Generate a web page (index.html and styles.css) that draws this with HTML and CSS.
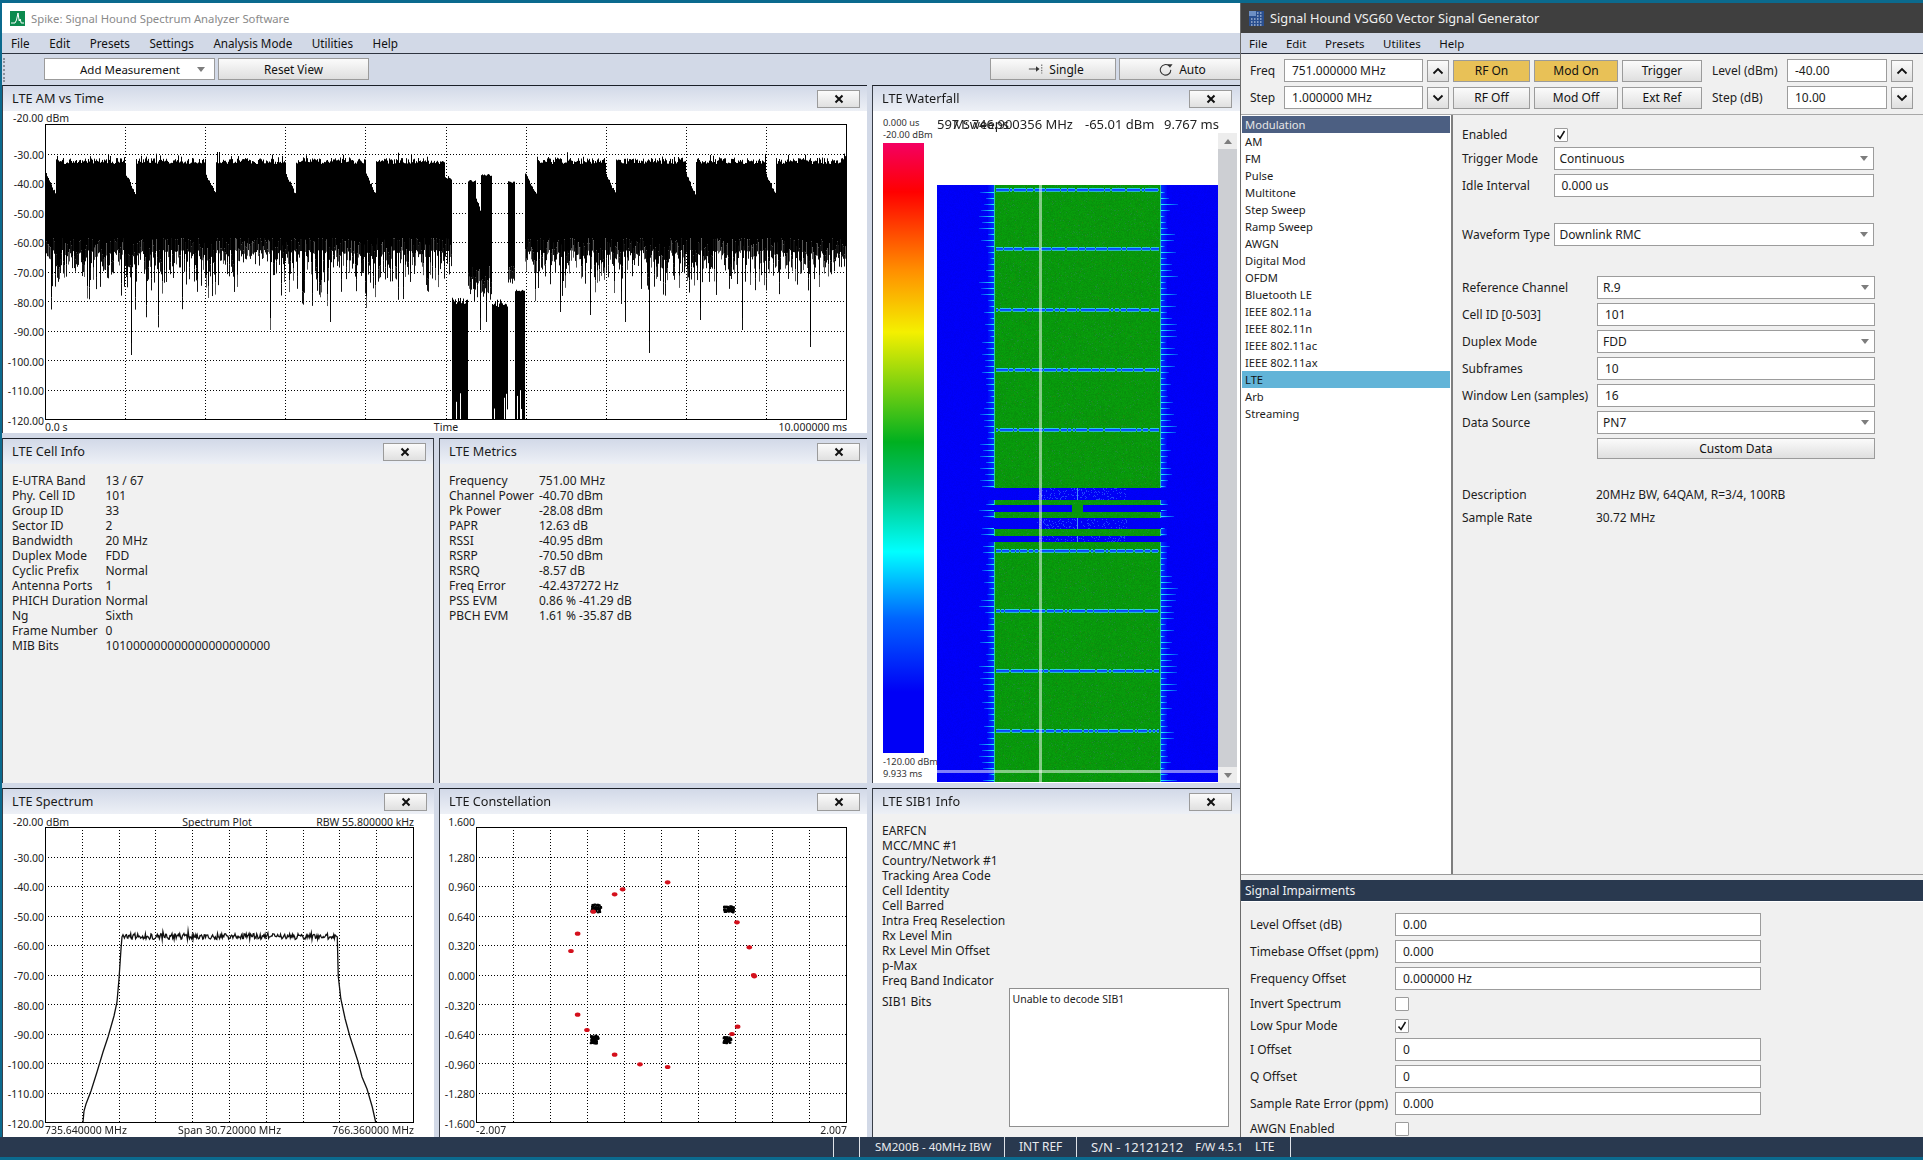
FILE: index.html
```html
<!DOCTYPE html>
<html lang="en">
<head>
<meta charset="utf-8">
<title>Spike and VSG60</title>
<link rel="stylesheet" href="styles.css">
</head>
<body>
<div class="windows">
  <section class="spike">
    <header class="titlebar title-spike">
      <svg class="appicon" viewBox="0 0 15 15"><rect width="15" height="15" fill="#0b8a4e"/><path d="M1 12h4l1.5-3 1.5-7 1.2 8 1-2 1 4h2.8" fill="none" stroke="#fff" stroke-width="1"/></svg>
      <span>Spike: Signal Hound Spectrum Analyzer Software</span>
    </header>
    <nav class="menu spike-menu"><span>File</span><span>Edit</span><span>Presets</span><span>Settings</span><span>Analysis Mode</span><span>Utilities</span><span>Help</span></nav>
    <div class="toolbar">
      <i class="grip"></i>
      <div class="tb-combo">Add Measurement<i class="tri"></i></div>
      <button class="btn tb-reset">Reset View</button>
      <button class="btn tb-single"><svg class="tb-icon" viewBox="0 0 18 12"><path d="M1 6h10" stroke="#333" fill="none"/><path d="M9 3l4 3-4 3z" fill="#333"/><path d="M15.5 1v10" stroke="#333" stroke-dasharray="1.5 1.5" fill="none"/></svg>Single</button>
      <button class="btn tb-auto"><svg class="tb-icon" viewBox="0 0 16 16"><path d="M11.5 4.5A6 6 0 1 0 13.5 9" fill="none" stroke="#333" stroke-width="1.2"/><path d="M9.5 5.5h6l-3-4z" fill="#333" transform="rotate(180 12.5 4)"/></svg>Auto</button>
    </div>
    <div class="workspace">
      <div class="col-left">
        <article class="panel am">
          <header class="ph"><span>LTE AM vs Time</span><button class="close"><svg viewBox="0 0 10 10"><path d="M1.5 1.5l7 7M8.5 1.5l-7 7" stroke="#111" stroke-width="2"/></svg></button></header>
          <div class="pb white">
            <div class="plot axis-wide">
              <div class="plot-top"><span>-20.00 dBm</span></div>
              <div class="yaxis"><span>-30.00</span><span>-40.00</span><span>-50.00</span><span>-60.00</span><span>-70.00</span><span>-80.00</span><span>-90.00</span><span>-100.00</span><span>-110.00</span><span>-120.00</span></div>
              <canvas id="am" width="802" height="296"></canvas>
              <div class="plot-bottom"><span>0.0 s</span><span>Time</span><span class="r">10.000000 ms</span></div>
            </div>
          </div>
        </article>
        <div class="row">
          <article class="panel p-a">
            <header class="ph"><span>LTE Cell Info</span><button class="close"><svg viewBox="0 0 10 10"><path d="M1.5 1.5l7 7M8.5 1.5l-7 7" stroke="#111" stroke-width="2"/></svg></button></header>
            <div class="pb info">
              <dl class="kv kv-cell">
                <dt>E-UTRA Band</dt><dd>13 / 67</dd>
                <dt>Phy. Cell ID</dt><dd>101</dd>
                <dt>Group ID</dt><dd>33</dd>
                <dt>Sector ID</dt><dd>2</dd>
                <dt>Bandwidth</dt><dd>20 MHz</dd>
                <dt>Duplex Mode</dt><dd>FDD</dd>
                <dt>Cyclic Prefix</dt><dd>Normal</dd>
                <dt>Antenna Ports</dt><dd>1</dd>
                <dt>PHICH Duration</dt><dd>Normal</dd>
                <dt>Ng</dt><dd>Sixth</dd>
                <dt>Frame Number</dt><dd>0</dd>
                <dt>MIB Bits</dt><dd>101000000000000000000000</dd>
              </dl>
            </div>
          </article>
          <article class="panel p-b">
            <header class="ph"><span>LTE Metrics</span><button class="close"><svg viewBox="0 0 10 10"><path d="M1.5 1.5l7 7M8.5 1.5l-7 7" stroke="#111" stroke-width="2"/></svg></button></header>
            <div class="pb info">
              <dl class="kv kv-metric">
                <dt>Frequency</dt><dd>751.00 MHz</dd>
                <dt>Channel Power</dt><dd>-40.70 dBm</dd>
                <dt>Pk Power</dt><dd>-28.08 dBm</dd>
                <dt>PAPR</dt><dd>12.63 dB</dd>
                <dt>RSSI</dt><dd>-40.95 dBm</dd>
                <dt>RSRP</dt><dd>-70.50 dBm</dd>
                <dt>RSRQ</dt><dd>-8.57 dB</dd>
                <dt>Freq Error</dt><dd>-42.437272 Hz</dd>
                <dt>PSS EVM</dt><dd>0.86 % -41.29 dB</dd>
                <dt>PBCH EVM</dt><dd>1.61 % -35.87 dB</dd>
              </dl>
            </div>
          </article>
        </div>
        <div class="row row-last">
          <article class="panel p-a">
            <header class="ph"><span>LTE Spectrum</span><button class="close"><svg viewBox="0 0 10 10"><path d="M1.5 1.5l7 7M8.5 1.5l-7 7" stroke="#111" stroke-width="2"/></svg></button></header>
            <div class="pb white">
              <div class="plot axis-wide">
                <div class="plot-top three"><span>-20.00 dBm</span><span class="mid">Spectrum Plot</span><span class="r">RBW 55.800000 kHz</span></div>
                <div class="yaxis"><span>-30.00</span><span>-40.00</span><span>-50.00</span><span>-60.00</span><span>-70.00</span><span>-80.00</span><span>-90.00</span><span>-100.00</span><span>-110.00</span><span>-120.00</span></div>
                <canvas id="spec" width="369" height="296"></canvas>
                <div class="plot-bottom"><span>735.640000 MHz</span><span>Span 30.720000 MHz</span><span class="r">766.360000 MHz</span></div>
              </div>
            </div>
          </article>
          <article class="panel p-b">
            <header class="ph"><span>LTE Constellation</span><button class="close"><svg viewBox="0 0 10 10"><path d="M1.5 1.5l7 7M8.5 1.5l-7 7" stroke="#111" stroke-width="2"/></svg></button></header>
            <div class="pb white">
              <div class="plot axis-narrow">
                <div class="plot-top"><span class="axis-top">1.600</span></div>
                <div class="yaxis"><span>1.280</span><span>0.960</span><span>0.640</span><span>0.320</span><span>0.000</span><span>-0.320</span><span>-0.640</span><span>-0.960</span><span>-1.280</span><span>-1.600</span></div>
                <canvas id="iq" width="371" height="296"></canvas>
                <div class="plot-bottom"><span>-2.007</span><span></span><span class="r">2.007</span></div>
              </div>
            </div>
          </article>
        </div>
      </div>
      <div class="col-right">
        <article class="panel waterfall">
          <header class="ph"><span>LTE Waterfall</span><button class="close"><svg viewBox="0 0 10 10"><path d="M1.5 1.5l7 7M8.5 1.5l-7 7" stroke="#111" stroke-width="2"/></svg></button></header>
          <div class="pb white wf-body">
            <div class="wf-scale">
              <span>0.000 us</span>
              <span>-20.00 dBm</span>
              <div class="wf-bar"></div>
              <span>-120.00 dBm</span>
              <span>9.933 ms</span>
            </div>
            <div class="wf-main">
              <div class="wf-readout">
                <span>597 Sweeps</span>
                <span class="over">M: 746.900356 MHz</span>
                <span class="dbm">-65.01 dBm</span>
                <span class="ms">9.767 ms</span>
              </div>
              <canvas id="wf" width="281" height="597"></canvas>
            </div>
            <div class="scroll"><div class="sb-btn"><i class="tri tri-up"></i></div><div class="sb-track"></div><div class="sb-btn"><i class="tri"></i></div></div>
          </div>
        </article>
        <article class="panel sib">
          <header class="ph"><span>LTE SIB1 Info</span><button class="close"><svg viewBox="0 0 10 10"><path d="M1.5 1.5l7 7M8.5 1.5l-7 7" stroke="#111" stroke-width="2"/></svg></button></header>
          <div class="pb info sib-body">
            <ul class="sib-list">
              <li>EARFCN</li><li>MCC/MNC #1</li><li>Country/Network #1</li><li>Tracking Area Code</li><li>Cell Identity</li><li>Cell Barred</li><li>Intra Freq Reselection</li><li>Rx Level Min</li><li>Rx Level Min Offset</li><li>p-Max</li><li>Freq Band Indicator</li>
            </ul>
            <div class="sib-bits"><span>SIB1 Bits</span><div class="textbox">Unable to decode SIB1</div></div>
          </div>
        </article>
      </div>
    </div>
  </section>

  <section class="vsg">
    <header class="titlebar dark">
      <svg class="appicon" viewBox="0 0 15 15"><rect width="15" height="15" fill="#2a4f8f"/><rect x="0" y="0" width="7" height="5" fill="#6d8fc4"/><path d="M8 2h6M8 5h6M2 8h12M2 11h12M2 14h12" stroke="#dfe8f5" stroke-dasharray="1.5 1.5" fill="none"/></svg>
      <span>Signal Hound VSG60 Vector Signal Generator</span>
    </header>
    <nav class="menu vsg-menu"><span>File</span><span>Edit</span><span>Presets</span><span>Utilites</span><span>Help</span></nav>
    <div class="vsg-tools">
      <label>Freq</label><div class="field">751.000000 MHz</div>
      <button class="btn arrow"><svg viewBox="0 0 12 8"><path d="M1.5 6.5L6 2l4.5 4.5" fill="none" stroke="#111" stroke-width="1.8"/></svg></button>
      <button class="btn on">RF On</button><button class="btn on">Mod On</button><button class="btn">Trigger</button>
      <label class="lvl">Level (dBm)</label><div class="field">-40.00</div>
      <button class="btn arrow"><svg viewBox="0 0 12 8"><path d="M1.5 6.5L6 2l4.5 4.5" fill="none" stroke="#111" stroke-width="1.8"/></svg></button>
      <label>Step</label><div class="field">1.000000 MHz</div>
      <button class="btn arrow"><svg viewBox="0 0 12 8"><path d="M1.5 1.5L6 6l4.5-4.5" fill="none" stroke="#111" stroke-width="1.8"/></svg></button>
      <button class="btn">RF Off</button><button class="btn">Mod Off</button><button class="btn">Ext Ref</button>
      <label class="lvl">Step (dB)</label><div class="field">10.00</div>
      <button class="btn arrow"><svg viewBox="0 0 12 8"><path d="M1.5 1.5L6 6l4.5-4.5" fill="none" stroke="#111" stroke-width="1.8"/></svg></button>
    </div>
    <div class="vsg-main">
      <ul class="modlist">
        <li class="head">Modulation</li><li>AM</li><li>FM</li><li>Pulse</li><li>Multitone</li><li>Step Sweep</li><li>Ramp Sweep</li><li>AWGN</li><li>Digital Mod</li><li>OFDM</li><li>Bluetooth LE</li><li>IEEE 802.11a</li><li>IEEE 802.11n</li><li>IEEE 802.11ac</li><li>IEEE 802.11ax</li><li class="sel">LTE</li><li>Arb</li><li>Streaming</li>
      </ul>
      <div class="pane">
        <div class="fr fr-top check-row"><span>Enabled</span><i class="check"><svg viewBox="0 0 12 12"><path d="M2.5 6.5l2.5 3 4.5-7.5" fill="none" stroke="#111" stroke-width="1.5"/></svg></i></div>
        <div class="fr fr-top"><span>Trigger Mode</span><div class="field combo">Continuous<i class="tri"></i></div></div>
        <div class="fr fr-top"><span>Idle Interval</span><div class="field">0.000 us</div></div>
        <div class="fr fr-top gap-wave"><span>Waveform Type</span><div class="field combo">Downlink RMC<i class="tri"></i></div></div>
        <div class="fr fr-lte gap-ref"><span>Reference Channel</span><div class="field combo">R.9<i class="tri"></i></div></div>
        <div class="fr fr-lte"><span>Cell ID [0-503]</span><div class="field">101</div></div>
        <div class="fr fr-lte"><span>Duplex Mode</span><div class="field combo">FDD<i class="tri"></i></div></div>
        <div class="fr fr-lte"><span>Subframes</span><div class="field">10</div></div>
        <div class="fr fr-lte"><span>Window Len (samples)</span><div class="field">16</div></div>
        <div class="fr fr-lte"><span>Data Source</span><div class="field combo">PN7<i class="tri"></i></div></div>
        <div class="fr fr-lte"><span></span><button class="btn custom">Custom Data</button></div>
        <div class="desc"><span>Description</span><span>20MHz BW, 64QAM, R=3/4, 100RB</span><span>Sample Rate</span><span>30.72 MHz</span></div>
      </div>
    </div>
    <div class="imp-head">Signal Impairments</div>
    <div class="imp">
      <div class="ir"><span>Level Offset (dB)</span><div class="field">0.00</div></div>
      <div class="ir"><span>Timebase Offset (ppm)</span><div class="field">0.000</div></div>
      <div class="ir"><span>Frequency Offset</span><div class="field">0.000000 Hz</div></div>
      <div class="ir ic c1"><span>Invert Spectrum</span><i class="check"></i></div>
      <div class="ir ic c2"><span>Low Spur Mode</span><i class="check"><svg viewBox="0 0 12 12"><path d="M2.5 6.5l2.5 3 4.5-7.5" fill="none" stroke="#111" stroke-width="1.5"/></svg></i></div>
      <div class="ir c3"><span>I Offset</span><div class="field">0</div></div>
      <div class="ir"><span>Q Offset</span><div class="field">0</div></div>
      <div class="ir"><span>Sample Rate Error (ppm)</span><div class="field">0.000</div></div>
      <div class="ir ic c1"><span>AWGN Enabled</span><i class="check"></i></div>
    </div>
  </section>
</div>
<footer class="status">
  <div class="s s1"></div>
  <div class="s s2"></div>
  <div class="s s3">SM200B - 40MHz IBW</div>
  <div class="s s4">INT REF</div>
  <div class="s s5"><span class="sn">S/N - 12121212</span><span class="fw">F/W 4.5.1</span></div>
  <div class="s s6">LTE</div>
</footer>
<script src="script.js"></script>
</body>
</html>
```
FILE: styles.css
```css
* { box-sizing: border-box; }
html, body { margin: 0; padding: 0; }
body {
  width: 1923px; height: 1160px; overflow: hidden;
  background: #0b6a8e; padding-top: 3px;
  font: 12px/15px "Noto Sans", "Liberation Sans", sans-serif; color: #1c1c1c;
  display: flex; flex-direction: column;
}
ul { list-style: none; margin: 0; padding: 0; }
dl, dd { margin: 0; }
button { font: inherit; color: inherit; padding: 0; }
canvas { display: block; }

.windows { display: flex; height: 1134px; flex: none; padding-left: 2px; }
.spike { width: 1238px; background: #d2d9e7; display: flex; flex-direction: column; overflow: hidden; }
.vsg { width: 683px; background: #f0f0f0; border-left: 1px solid #6b6b6b; display: flex; flex-direction: column; overflow: hidden; }

.titlebar { height: 30px; flex: none; background: #fff; color: #8a8a8a; display: flex; align-items: center; padding-left: 8px; gap: 6px; font-size: 12.8px; }
.title-spike { font-size: 11.3px; }
.titlebar.dark { background: #3f3f3f; color: #f0f0f0; }
.appicon { width: 15px; height: 15px; }
.menu { height: 21px; flex: none; background: #d2d9e7; border-bottom: 1px solid #2e3440; display: flex; align-items: center; color: #111; }
.spike-menu { padding-left: 9px; gap: 19.5px; font-size: 11.7px; }
.vsg-menu { padding-left: 8px; gap: 18.5px; font-size: 11.5px; }

.toolbar { height: 31px; flex: none; padding: 4px 0 0 1px; display: flex; align-items: flex-start; gap: 3px; }
.grip { width: 2px; height: 24px; margin: 0 36px 0 0; border-left: 2px dotted #8a8f9a; }
.btn {
  border: 1px solid #9b9b9b; background: linear-gradient(#fbfbfb, #dfdfdf);
  display: flex; align-items: center; justify-content: center; height: 22px; color: #111;
}
.tb-combo { width: 171px; height: 22px; background: #fff; border: 1px solid #9b9b9b; display: flex; align-items: center; padding-left: 35px; gap: 17px; color: #111; font-size: 11.5px; }
.tb-reset { width: 151px; font-size: 11.7px; }
.tb-single { width: 126px; margin-left: auto; gap: 5px; padding-left: 6px; }
.tb-auto { width: 126px; gap: 5px; margin-right: -5px; }
.tb-icon { width: 16px; height: 14px; }
.tri { display: inline-block; width: 0; height: 0; border-left: 4px solid transparent; border-right: 4px solid transparent; border-top: 5px solid #7d7d7d; }
.tri-up { border-top: 0; border-bottom: 5px solid #7d7d7d; }

.workspace { flex: 1; display: flex; min-height: 0; gap: 5px; }
.col-left { width: 865px; display: flex; flex-direction: column; gap: 5px; }
.col-right { width: 368px; display: flex; flex-direction: column; gap: 5px; }
.row { display: flex; gap: 5px; height: 345px; }
.row-last { height: 349px; }
.panel { display: flex; flex-direction: column; border-top: 1px solid #1b2028; border-left: 1px solid #3a3f48; min-height: 0; }
.am { height: 348px; }
.p-a { width: 432px; }
.p-b { width: 428px; }
.row:not(.row-last) .p-a { border-right: 1px solid #3a3f48; }
.waterfall { height: 698px; }
.sib { height: 349px; }
.ph {
  height: 25px; flex: none; background: linear-gradient(#d2d9e8, #edf0f6);
  display: flex; align-items: center; justify-content: space-between;
  padding-left: 9px; color: #1a1a1a; font-size: 12.7px;
}
.close {
  width: 43px; height: 18px; margin-right: 7px; margin-top: 1px; border: 1px solid #9b9b9b; flex: none;
  background: linear-gradient(#fbfbfb, #e0e0e0); display: flex; align-items: center; justify-content: center;
}
.col-right .close { margin-right: 8px; }
.close svg { width: 10px; height: 10px; }
.pb { flex: 1; min-height: 0; }
.white { background: #fff; }
.info { background: #f1f1f1; }

/* plots */
.plot { display: grid; font-size: 10.5px; line-height: 14px; width: max-content; color: #222; }
.axis-wide { grid-template-columns: 42px auto; }
.axis-narrow { grid-template-columns: 36px auto; }
.plot-top { grid-column: 1 / -1; height: 13px; padding-left: 10px; white-space: nowrap; line-height: 15px; }
.row-last .plot-top { line-height: 17px; }
.three { display: grid; grid-template-columns: 1fr auto 1fr; }
.three .mid { margin-left: 7px; }
.axis-narrow .plot-top { padding-left: 0; }
.axis-top { display: block; width: 35px; text-align: right; }
.yaxis {
  height: 310px; margin-top: -6px; margin-bottom: -8px; padding-top: 29.5px; padding-right: 1px;
  display: flex; flex-direction: column; justify-content: space-between; align-items: flex-end;
}
.plot-bottom { grid-column: 2; display: grid; grid-template-columns: 1fr auto 1fr; white-space: nowrap; height: 14px; }
.r { text-align: right; }

/* key/values */
.kv { display: grid; padding: 9px 0 0 9px; grid-auto-rows: 15px; white-space: nowrap; }
.kv-cell { grid-template-columns: 93.5px auto; }
.kv-metric { grid-template-columns: 90px auto; }

/* waterfall */
.wf-body { display: flex; }
.wf-scale { width: 64px; padding: 6px 0 0 10px; font-size: 9.3px; line-height: 12px; white-space: nowrap; display: flex; flex-direction: column; color: #333; }
.wf-bar {
  width: 41px; height: 610px; flex: none; margin: 2px 0 3px;
  background: linear-gradient(#f40062 0%, #ff0000 8%, #ff9000 21%, #f4f000 31%, #00b020 49%, #00c070 56%, #00ffff 67%, #0064ff 78%, #0000f6 90%, #0000f6 100%);
}
.wf-main { width: 281px; display: flex; flex-direction: column; }
.wf-readout { height: 74px; position: relative; font-size: 13px; line-height: 26px; white-space: nowrap; color: #222; }
.wf-readout span { position: absolute; top: 0; left: 0; }
.wf-readout .over { left: 16px; }
.wf-readout .dbm { left: 148px; }
.wf-readout .ms { left: 227px; }
.scroll { width: 19px; margin-top: 22px; display: flex; flex-direction: column; }
.sb-btn { height: 16px; flex: none; background: #ededed; display: flex; align-items: center; justify-content: center; }
.sb-track { flex: 1; background: #cdcfd3; }

/* sib */
.sib-body { padding: 9px 0 0 9px; display: flex; flex-direction: column; }
.sib-list li { height: 15px; white-space: nowrap; }
.sib-bits { display: flex; height: 139px; margin-top: 0; }
.sib-bits span { width: 126.5px; padding-top: 6px; }
.textbox { width: 220px; height: 139px; background: #fff; border: 1px solid #8f8f8f; padding: 3px 3px; font-size: 10.5px; }

/* vsg */
.vsg-tools {
  height: 61px; flex: none; padding: 5px 0 0 9px; border-bottom: 1px solid #a8a8a8;
  display: grid; grid-template-columns: 30px 139px 22px 77px 84px 80px 77px 100px 22px; grid-auto-rows: 23px; gap: 4px;
  align-items: center;
}
.vsg-tools label { white-space: nowrap; }
.vsg-tools .lvl { padding-left: 6px; }
.field { height: 23px; background: #fff; border: 1px solid #9c9c9c; padding-left: 7px; line-height: 21px; white-space: nowrap; display: flex; align-items: center; }
.combo { padding-left: 5px; justify-content: space-between; padding-right: 5px; }
.btn.on { background: #e8c157; }
.arrow { height: 22px; }
.arrow svg { width: 12px; height: 8px; }
.vsg-main { height: 760px; flex: none; display: flex; border-bottom: 1px solid #9a9a9a; }
.modlist { width: 212px; background: #fff; border-right: 2px solid #7e7e7e; padding: 1px 0 0 1px; font-size: 11.2px; }
.modlist li { height: 17px; line-height: 17px; padding-left: 3px; width: 208px; white-space: nowrap; }
.modlist .head { background: #4c5f82; color: #e6e6e6; }
.modlist .sel { background: #62b4d8; color: #111; }
.pane { flex: 1; padding: 12px 0 0 9px; }
.fr { display: grid; align-items: center; margin-bottom: 4px; white-space: nowrap; }
.fr-top { grid-template-columns: 91.5px 320.5px; }
.fr-lte { grid-template-columns: 135px 277.5px; }
.check-row { margin-bottom: 6px; height: 14px; }
.gap-wave { margin-top: 26px; }
.gap-ref { margin-top: 30px; }
.custom { height: 21px; width: 100%; }
.check { display: flex; width: 14px; height: 14px; background: #fff; border: 1px solid #9c9c9c; border-radius: 1px; align-items: center; justify-content: center; }
.check svg { width: 12px; height: 12px; }
.desc { display: grid; grid-template-columns: 134px auto; grid-auto-rows: 15px; row-gap: 8px; margin-top: 28px; white-space: nowrap; }
.imp-head { height: 22px; flex: none; margin-top: 5px; background: #29394f; color: #eef0f3; padding-left: 4px; line-height: 21px; border-bottom: 1px solid #fff; }
.imp { flex: 1; padding: 11px 0 0 9px; }
.ir { display: grid; grid-template-columns: 145px 366px; align-items: center; margin-bottom: 4px; white-space: nowrap; }
.ic { height: 14px; }
.c1 { margin-top: 6px; margin-bottom: 8px; }
.c2 { margin-bottom: 6px; }
.c3 { margin-top: 0; }

.status { height: 20px; flex: none; background: #29394f; color: #e9ebee; display: flex; font-size: 11.5px; line-height: 20px; white-space: nowrap; }
.s { border-right: 1px solid #dfe3e8; height: 20px; }
.s1 { width: 834px; }
.s2 { width: 26px; }
.s3 { width: 145px; padding-left: 15px; }
.s4 { width: 72px; padding-left: 14px; font-size: 12px; }
.s5 { width: 164px; padding-left: 14px; border-right: 0; display: flex; gap: 12px; }
.sn { font-size: 13px; }
.fw { font-size: 11px; }
.s6 { width: 50px; padding-left: 14px; font-size: 12px; }
```
FILE: script.js
```js
function rng(seed) {
  return function () {
    seed |= 0; seed = seed + 0x6D2B79F5 | 0;
    var t = Math.imul(seed ^ seed >>> 15, 1 | seed);
    t = t + Math.imul(t ^ t >>> 7, 61 | t) ^ t;
    return ((t ^ t >>> 14) >>> 0) / 4294967296;
  };
}
function grid(ctx, w, h) {
  ctx.fillStyle = '#fff';
  ctx.fillRect(0, 0, w, h);
  ctx.strokeStyle = '#000';
  ctx.lineWidth = 1;
  ctx.setLineDash([1, 2]);
  for (var i = 1; i < 10; i++) {
    var x = Math.round((w - 1) * i / 10) + 0.5;
    ctx.beginPath(); ctx.moveTo(x, 0); ctx.lineTo(x, h); ctx.stroke();
    var y = Math.round((h - 1) * i / 10) + 0.5;
    ctx.beginPath(); ctx.moveTo(0, y); ctx.lineTo(w, y); ctx.stroke();
  }
  ctx.setLineDash([]);
}
function frame(ctx, w, h) {
  ctx.strokeStyle = '#000';
  ctx.lineWidth = 1;
  ctx.strokeRect(0.5, 0.5, w - 1, h - 1);
}

/* AM vs time */
(function () {
  var c = document.getElementById('am'), ctx = c.getContext('2d');
  var W = c.width, H = c.height, ox = 45, oy = 124, r = rng(7);
  grid(ctx, W, H);
  var starts = [56, 136, 216, 296, 376, 537, 616, 696, 776];
  var long = { 131: 355, 270: 330, 330: 322, 590: 315, 625: 322, 649: 353, 700: 320, 742: 330, 810: 347, 560: 312, 480: 330, 486: 322 };
  function vline(x, a, b, col) {
    ctx.fillStyle = col;
    ctx.fillRect(x - ox, a - oy, 1, b - a);
  }
  for (var x = 46; x < 846; x++) {
    var top = null, bot = 0, lowTop = null;
    for (var i = 0; i < starts.length; i++) {
      var s = starts[i];
      if (x >= s && x < s + 69.5) {
        top = 158 + r() * 6;
        if (r() < 0.15) top -= r() * 6;
        if (s === 216 && x < 220 && r() < .5) top = 152;
      } else if (x >= s - 10 && x < s && s !== 537) {
        top = 173 + (x - s + 10) * 2.1 + r() * 3;
      }
    }
    if (x >= 445 && x < 452) top = 176 + r() * 4;
    if (x >= 525 && x < 537) top = 172 + (x - 525) * 1.8 + r() * 3;
    if (x >= 452 && x < 468) { top = null; lowTop = 297 + r() * 8; }
    if (x >= 468 && x < 476) top = 180 + r() * 2;
    if (x >= 476 && x < 481) top = 196 + (x - 476) * 3 + r() * 3;
    if (x >= 481 && x < 492) top = 174 + r() * 2;
    if (x >= 492 && x < 508) { top = null; lowTop = 299 + r() * 8; }
    if (x >= 508 && x < 515) top = 181 + r() * 2;
    if (x >= 515 && x < 525) { top = null; lowTop = 288 + r() * 4; }
    if (top !== null) {
      bot = 250 + r() * r() * 55;
      if (r() < 0.1) bot += r() * 40;
      if (x >= 468 && x < 492) bot = 278 + r() * 25;
      if (x >= 508 && x < 515) bot = 272 + r() * 18;
      if (long[x]) bot = long[x];
      vline(x, top, bot - 12, '#000');
      vline(x, bot - 12, bot, r() < 0.25 ? '#555' : '#111');
    }
    if (lowTop !== null) {
      var lb = 419 - (r() < 0.35 ? r() * 30 : 0);
      vline(x, lowTop, lb, '#000');
    }
  }
  frame(ctx, W, H);
})();

/* Spectrum */
(function () {
  var c = document.getElementById('spec'), ctx = c.getContext('2d');
  var W = c.width, H = c.height, ox = 45, oy = 828, r = rng(3);
  grid(ctx, W, H);
  var L = [[83, 1123], [84, 1112], [86, 1105], [91, 1092], [97, 1073], [103, 1053], [108, 1038], [114, 1017], [117, 1003], [119, 980], [121, 950], [122, 938]];
  var R = [[337, 938], [338, 977], [341, 1000], [345, 1020], [350, 1037], [358, 1063], [362, 1078], [367, 1090], [372, 1108], [376, 1123]];
  ctx.strokeStyle = '#111';
  ctx.lineWidth = 1.3;
  ctx.beginPath();
  L.forEach(function (p, i) { i ? ctx.lineTo(p[0] - ox, p[1] - oy) : ctx.moveTo(p[0] - ox, p[1] - oy); });
  for (var x = 123; x < 337; x += 0.7) {
    var n = (r() - 0.5) * 6;
    if (r() < 0.05) n -= 3;
    ctx.lineTo(x - ox, 937.5 + n - oy);
  }
  R.forEach(function (p) { ctx.lineTo(p[0] - ox + (r() - .5), p[1] - oy); });
  ctx.stroke();
  frame(ctx, W, H);
})();

/* Constellation */
(function () {
  var c = document.getElementById('iq'), ctx = c.getContext('2d');
  var W = c.width, H = c.height, r = rng(11);
  grid(ctx, W, H);
  var red = [[715, 310], [580, 331], [556, 346], [492, 398], [445, 464], [425, 516], [923, 430], [960, 505], [973, 588], [975, 592], [925, 743], [908, 765], [445, 707], [473, 753], [556, 827], [632, 856], [715, 864]];
  var black = [[498, 385, 5, 4], [896, 388, 5, 3], [493, 779, 4, 4], [892, 781, 4, 3]];
  function px(v) { return (430 + v / 3) - 476.7; }
  function py(v) { return (780 + v / 3) - 828; }
  black.forEach(function (b) {
    ctx.fillStyle = '#000';
    for (var i = 0; i < 60; i++) {
      ctx.fillRect(px(b[0]) + (r() - .5) * b[2] * 2, py(b[1]) + (r() - .5) * b[3] * 2, 2, 2);
    }
  });
  ctx.fillStyle = '#d4101c';
  red.forEach(function (p) {
    ctx.beginPath();
    ctx.ellipse(px(p[0]), py(p[1]), 2.8, 2.1, 0, 0, 7);
    ctx.fill();
  });
  frame(ctx, W, H);
})();

/* Waterfall */
(function () {
  var c = document.getElementById('wf'), ctx = c.getContext('2d');
  var W = c.width, H = c.height, r = rng(5);
  var ox = 937, oy = 185, gl = 994 - ox, gr = 1161 - ox;
  var img = ctx.createImageData(W, H), d = img.data;
  function set(x, y, R, G, B) {
    if (x < 0 || y < 0 || x >= W || y >= H) return;
    var i = (y * W + x) * 4;
    d[i] = R; d[i + 1] = G; d[i + 2] = B; d[i + 3] = 255;
  }
  var solid = [[185, 488], [500, 505], [512, 518], [529, 536], [542, 782]];
  var dashes = [189, 248, 309, 369, 429, 550, 610, 670, 730];
  function isGreen(y) {
    for (var i = 0; i < solid.length; i++) if (y >= solid[i][0] && y < solid[i][1]) return true;
    return false;
  }
  for (var y = 0; y < H; y++) {
    var ay = y + oy, g = isGreen(ay);
    for (var x = 0; x < W; x++) set(x, y, 0, 0, 240 + r() * 12);
    if (g) {
      for (var q = 0; q < 6; q++) {
        set(gl - 1 - q, y, 0, 50 - q * 8, 250);
        set(gr + q, y, 0, 50 - q * 8, 250);
      }
      for (x = gl; x < gr; x++) {
        var n = r();
        set(x, y, n < .06 ? 26 : 8, 142 + n * 18, n < .03 ? 50 : 12);
      }
      set(gl, y, 40, 200, 170); set(gr - 1, y, 40, 200, 170);
    }
    if (ay % 6 === 0 && (g || r() < .3) && ay > 186) {
      var a = 3 + r() * 12, b = 3 + r() * 14;
      for (var k = 0; k < a; k++) { var f = 1 - k / a; set(gl - 1 - k, y, 30 * f, 60 + 190 * f, 250); }
      for (k = 0; k < b; k++) { f = 1 - k / b; set(gr + k, y, 30 * f, 60 + 190 * f, 250); }
    }
  }
  dashes.forEach(function (ay) {
    var x = gl + 2, y = ay - oy, on = true;
    while (x < gr - 2) {
      var len = on ? 2 + Math.floor(r() * 14) : 1 + Math.floor(r() * 2);
      for (var i = 0; i < len && x + i < gr - 2; i++) {
        if (on) { set(x + i, y, 10, 70, 255); set(x + i, y + 1, 10, 90, 255); set(x + i, y - 1, 40, 200, 230); set(x + i, y + 2, 40, 180, 200); }
        else { set(x + i, y, 30, 170, 190); set(x + i, y + 1, 30, 170, 190); }
      }
      x += len; on = !on;
    }
  });
  // thin centre strip and square
  for (var ay2 = 488; ay2 < 542; ay2++) {
    if (!isGreen(ay2)) {
      set(1077 - ox, ay2 - oy, 70, 140, 255);
      if (ay2 < 500 || ay2 >= 536 || (ay2 > 518 && ay2 < 529)) {
        for (var s = 0; s < 12; s++) {
          set(1037 + Math.floor(r() * 90) - ox, ay2 - oy, 30, 70, 250);
        }
      }
    }
  }
  for (var y2 = 504; y2 < 514; y2++) for (var x2 = 1072; x2 < 1083; x2++) set(x2 - ox, y2 - oy, 8, 150, 14);
  ctx.putImageData(img, 0, 0);
  ctx.fillStyle = 'rgba(255,255,255,.5)';
  ctx.fillRect(1039 - ox, 0, 3, H);
  ctx.fillRect(0, 770 - oy, W, 3);
})();
```
